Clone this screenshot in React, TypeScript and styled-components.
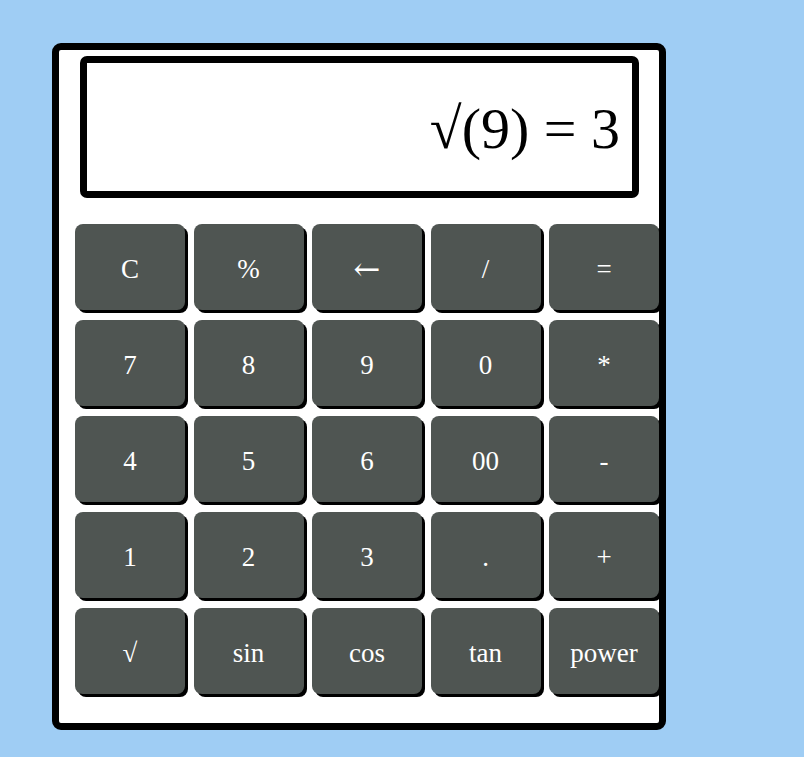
import React from "react";
import styled, { createGlobalStyle } from "styled-components";

const Global = createGlobalStyle`
  html, body {
    margin: 0;
    padding: 0;
    background: #9fcdf4;
    font-family: "Liberation Serif", "Times New Roman", serif;
  }
`;

const Page = styled.div`
  padding: 43px 0 0 52px;
  min-height: 757px;
  box-sizing: border-box;
`;

const Calculator = styled.div`
  box-sizing: border-box;
  width: 614px;
  height: 687px;
  background: #ffffff;
  border: 7px solid #000;
  border-radius: 9px;
  padding: 6px 0 0 16px;
`;

const Display = styled.div`
  box-sizing: border-box;
  width: 559px;
  height: 142px;
  margin-left: 5px;
  border: 7px solid #000;
  border-radius: 7px;
  display: flex;
  align-items: center;
  justify-content: flex-end;
  padding-right: 12px;
  padding-top: 2px;
  font-size: 58px;
  color: #000;
`;

const Keys = styled.div`
  margin-top: 26px;
  display: grid;
  grid-template-columns: repeat(5, 110px);
  grid-auto-rows: 86px;
  column-gap: 8.5px;
  row-gap: 10px;
`;

const Key = styled.button<{ $wide?: boolean }>`
  font-family: ${(p) =>
    p.$wide ? '"DejaVu Serif", serif' : '"Liberation Serif", "Times New Roman", serif'};
  font-size: ${(p) => (p.$wide ? "32px" : "27px")};
  line-height: ${(p) => (p.$wide ? "27px" : "normal")};
  color: #ffffff;
  background: #4f5552;
  border: none;
  border-radius: 8px;
  box-shadow: 3px 3px 0 0 #000;
  padding: 5px 0 0;
  cursor: pointer;
`;

const keys = [
  "C", "%", "←", "/", "=",
  "7", "8", "9", "0", "*",
  "4", "5", "6", "00", "-",
  "1", "2", "3", ".", "+",
  "√", "sin", "cos", "tan", "power",
];

export default function App() {
  return (
    <>
      <Global />
      <Page>
        <Calculator>
          <Display>√(9) = 3</Display>
          <Keys>
            {keys.map((k) => (
              <Key key={k} $wide={k === "←"}>
                {k}
              </Key>
            ))}
          </Keys>
        </Calculator>
      </Page>
    </>
  );
}
